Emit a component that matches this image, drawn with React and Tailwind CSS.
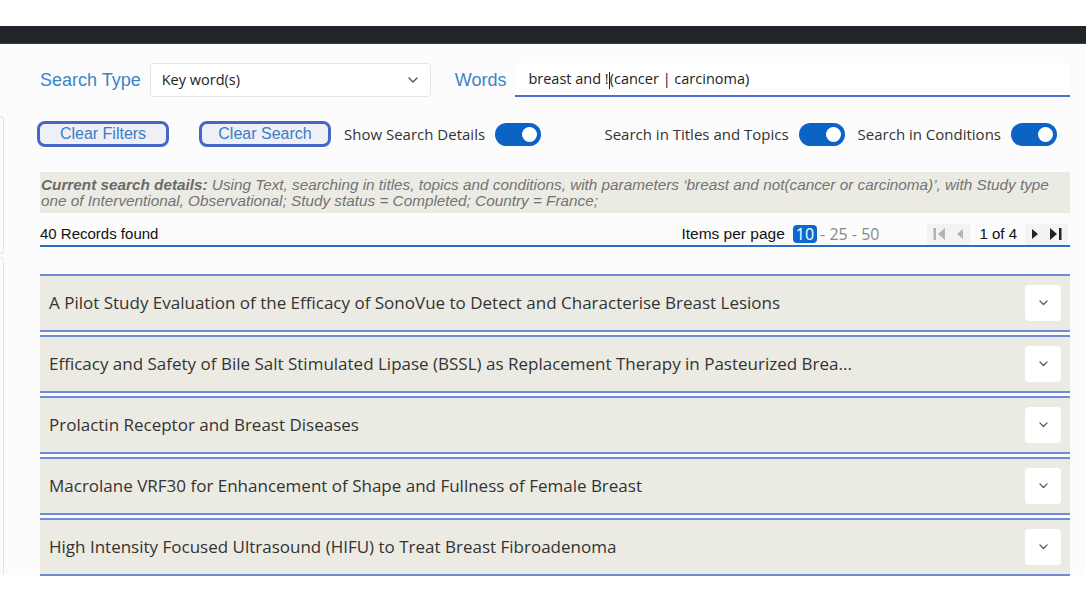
import React from "react";

const seg = { fontFamily: '"Open Sans", "Noto Sans", sans-serif' };
const ari = { fontFamily: '"Liberation Sans", Arial, sans-serif' };

function Toggle() {
  return (
    <div className="w-[46px] h-[23px] rounded-full bg-[#0b63c5] flex items-center justify-end pr-[4px] shrink-0">
      <div className="w-[15px] h-[15px] rounded-full bg-white" />
    </div>
  );
}

function Chevron({ size = 10, color = "#444" }) {
  return (
    <svg width={size} height={size * 0.6} viewBox="0 0 10 6" fill="none">
      <path d="M1 1l4 4 4-4" stroke={color} strokeWidth="1.4" strokeLinecap="round" strokeLinejoin="round" />
    </svg>
  );
}

const titles = [
  "A Pilot Study Evaluation of the Efficacy of SonoVue to Detect and Characterise Breast Lesions",
  "Efficacy and Safety of Bile Salt Stimulated Lipase (BSSL) as Replacement Therapy in Pasteurized Brea...",
  "Prolactin Receptor and Breast Diseases",
  "Macrolane VRF30 for Enhancement of Shape and Fullness of Female Breast",
  "High Intensity Focused Ultrasound (HIFU) to Treat Breast Fibroadenoma",
];

export default function App() {
  return (
    <div className="w-[1086px] h-[601px] bg-white overflow-hidden relative">
      <div className="h-[26px] bg-white" />
      <div className="h-[18px] bg-[#212529] border-b border-[#3a3d40]" />
      <div className="h-[531px] bg-[#fcfcfc] flex">
        {/* left partial sidebar edge */}
        <div className="w-[4px] flex flex-col pt-[72px] gap-[3px] shrink-0">
          <div className="h-[138px] border-r border-y border-[#e4e4e4] rounded-r-[4px]" />
          <div className="flex-1 border-r border-t border-[#e4e4e4] rounded-tr-[4px]" />
        </div>
        <div className="flex-1 pl-[36px] pr-[16px] pt-[19px]">
          {/* row 1 */}
          <div className="flex items-center h-[34px]">
            <span className="text-[18px] text-[#3a86c9] mr-[9px]" style={ari}>Search Type</span>
            <div className="w-[281px] h-[34px] bg-white border border-[#e6e6e6] rounded-[3px] flex items-center justify-between pl-[11px] pr-[12px]">
              <span className="text-[14.5px] text-[#222]" style={seg}>Key word(s)</span>
              <Chevron size={10} color="#555" />
            </div>
            <span className="text-[18px] text-[#3a86c9] ml-[24px] mr-[9px]" style={ari}>Words</span>
            <div className="flex-1 h-[34px] bg-white border-b-2 border-[#4a6fd0] flex items-center pl-[13px]">
              <span className="text-[14.5px] text-[#222]" style={seg}>
                breast and !<span className="inline-block w-[1px] h-[17px] bg-[#222] align-middle" />(cancer | carcinoma)
              </span>
            </div>
          </div>
          {/* row 2 */}
          <div className="flex items-center mt-[24px] h-[26px]">
            <button className="w-[132px] h-[26px] border-[3px] border-[#4866c8] rounded-[8px] bg-[#eef0f5] text-[16px] leading-[18px] text-[#3a7cc9] ml-[-3px]" style={ari}>Clear Filters</button>
            <button className="w-[132px] h-[26px] border-[3px] border-[#4866c8] rounded-[8px] bg-[#eef0f5] text-[16px] leading-[18px] text-[#3a7cc9] ml-[30px]" style={ari}>Clear Search</button>
            <span className="text-[15px] text-[#333] ml-[13px] mr-[10px]" style={seg}>Show Search Details</span>
            <Toggle />
            <div className="flex-1" />
            <span className="text-[15px] text-[#333] mr-[10px]" style={seg}>Search in Titles and Topics</span>
            <Toggle />
            <span className="text-[15px] text-[#333] ml-[13px] mr-[10px]" style={seg}>Search in Conditions</span>
            <Toggle />
            <div className="w-[13px]" />
          </div>
          {/* details */}
          <div className="mt-[25px] h-[41px] bg-[#ebebe3] px-[1px] pt-[5px] text-[15.3px] leading-[16px] italic text-[#737373] whitespace-nowrap" style={ari}>
            <b className="font-bold text-[#6a6a6a]">Current search details:</b> Using Text, searching in titles, topics and conditions, with parameters ‘breast and not(cancer or carcinoma)’, with Study type
            <br />
            one of Interventional, Observational; Study status = Completed; Country = France;
          </div>
          {/* records row */}
          <div className="mt-[10px] h-[24px] border-b-2 border-[#2a6fc4] flex items-center">
            <span className="text-[15px] text-[#111]" style={ari}>40 Records found</span>
            <div className="flex-1" />
            <span className="text-[15.5px] text-[#111]" style={ari}>Items per page</span>
            <span className="ml-[8px] bg-[#0a6ad0] text-white rounded-[4px] px-[3px] text-[16px] leading-[18px]" style={seg}>10</span>
            <span className="text-[16px] text-[#888] ml-[3px]" style={seg}>- 25 - 50</span>
            <div className="w-[48px]" />
            <div className="flex items-center h-[21px] bg-[#f3f3f3] px-[6px] gap-[9px]">
              <svg width="13" height="14" viewBox="0 0 13 14"><rect x="0.5" y="1" width="2.5" height="12" fill="#b3b3b3" /><path d="M12 1v12L5 7z" fill="#b3b3b3" /></svg>
              <svg width="9" height="14" viewBox="0 0 9 14"><path d="M8 2v10L2 7z" fill="#b3b3b3" /></svg>
            </div>
            <span className="text-[15px] text-[#111] ml-[9px] mr-[8px]" style={ari}>1 of 4</span>
            <div className="flex items-center h-[21px] bg-[#f3f3f3] px-[6px] gap-[9px] mr-[2px]">
              <svg width="9" height="14" viewBox="0 0 9 14"><path d="M1 2v10l6-5z" fill="#222" /></svg>
              <svg width="13" height="14" viewBox="0 0 13 14"><path d="M1 1v12l7-6z" fill="#222" /><rect x="10" y="1" width="2.5" height="12" fill="#222" /></svg>
            </div>
          </div>
          {/* items */}
          <div className="mt-[27px] flex flex-col gap-[3px]">
            {titles.map((t) => (
              <div key={t} className="h-[58px] border-y-2 border-[#6f8ad6] bg-[#ecebe3] flex items-center justify-between pl-[9px] pr-[9px]">
                <span className="text-[17px] text-[#333] whitespace-nowrap" style={seg}>{t}</span>
                <div className="w-[36px] h-[36px] bg-white rounded-[4px] flex items-center justify-center">
                  <Chevron size={9} color="#555" />
                </div>
              </div>
            ))}
          </div>
        </div>
      </div>
    </div>
  );
}
